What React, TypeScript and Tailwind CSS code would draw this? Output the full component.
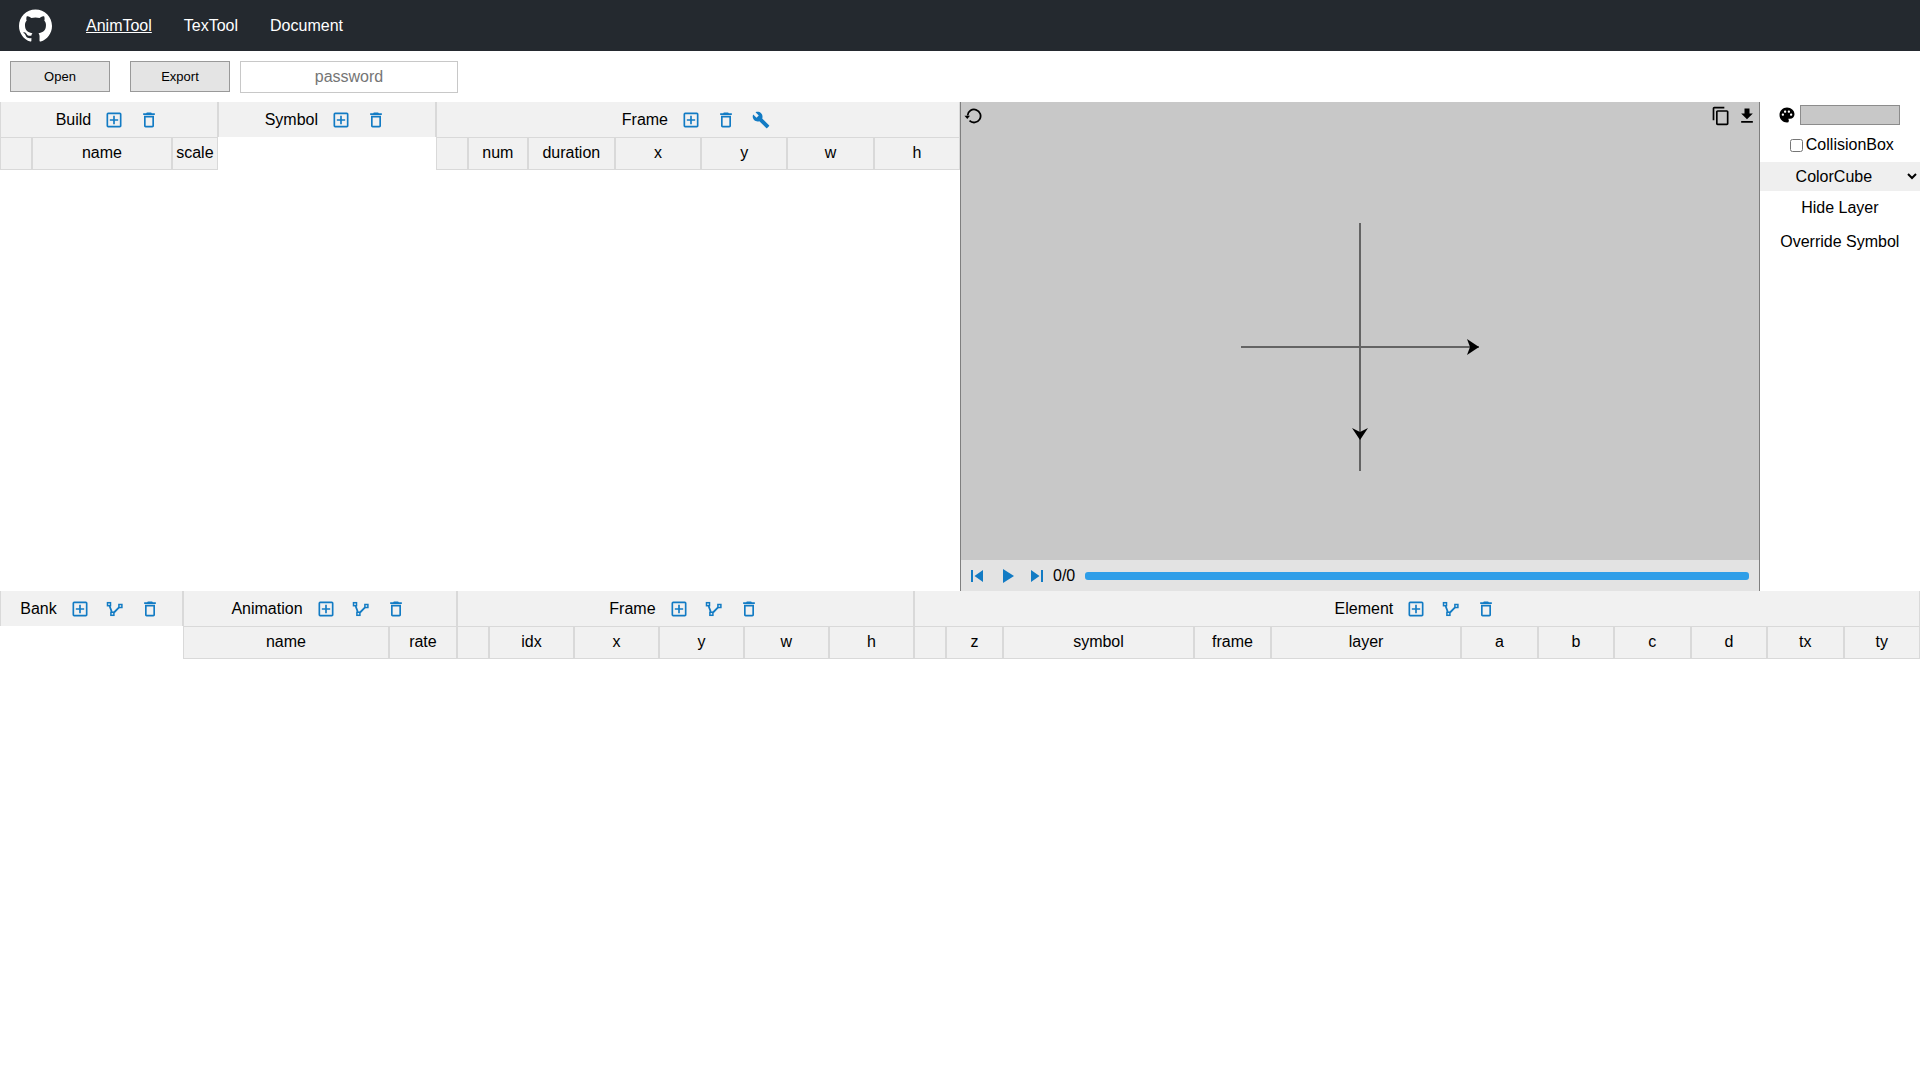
import { ReactNode } from 'react'
import { MdContentCopy, MdDeleteOutline, MdDownload, MdBuild, MdPalette, MdOutlineAddBox, MdSkipNext, MdSkipPrevious, MdPlayArrow } from 'react-icons/md'
import { SiGithub } from 'react-icons/si'

interface IconButtonProps {
    label: string,
    children: ReactNode
}

interface Column {
    label: string,
    width: string
}

interface PanelProps {
    title: string,
    width: string,
    actions: string[],
    columns?: Column[]
}

const PolylineIcon = () => (
    <svg width="18" height="18" viewBox="0 0 18 18" fill="none" stroke="currentColor" strokeWidth="1.5">
        <rect x="1.5" y="2.7" width="3" height="3" />
        <rect x="12.9" y="4.5" width="3" height="3" />
        <rect x="4.9" y="12.3" width="3" height="3" />
        <path d="M3.6 6 L5.8 12 M13 7.4 L8 12.5" strokeWidth="1.8" />
    </svg>
)

const ResetIcon = () => (
    <svg width="18" height="18" viewBox="0 0 18 18">
        <path d="M3.6 8.5 A6.5 6.5 0 1 1 5.5 13.6" fill="none" stroke="currentColor" strokeWidth="1.8" />
        <path d="M0.5 8.8 H6 L3.3 12 Z" fill="currentColor" />
    </svg>
)

const ICONS: Record<string, ReactNode> = {
    add: <MdOutlineAddBox size={20} />,
    link: <PolylineIcon />,
    delete: <MdDeleteOutline size={20} />,
    fix: <MdBuild size={18} />
}

const IconButton = ({ label, children }: IconButtonProps) => (
    <button type="button" aria-label={label} className="w-5 h-5 flex items-center justify-center cursor-pointer">
        {children}
    </button>
)

const Panel = ({ title, width, actions, columns }: PanelProps) => (
    <section className={width}>
        <div className="h-[35px] pr-[3px] flex items-center justify-center border-x border-[#d9d9d9] bg-[#f1f1f1]">
            <h2 className="mr-[13px]">{title}</h2>
            <div className="flex gap-[15px] text-[#127bc4]">
                {actions.map((action) => (
                    <IconButton key={action} label={`${action} ${title}`}>{ICONS[action]}</IconButton>
                ))}
            </div>
        </div>
        {
            columns && (
                <table className="w-full table-fixed border-separate border-spacing-0">
                    <thead>
                        <tr className="h-[33px] bg-[#f1f1f1]">
                            {columns.map((column, index) => (
                                <th key={index} className={`${column.width} p-0 pb-0.5 font-normal border border-[#d9d9d9]`}>
                                    {column.label}
                                </th>
                            ))}
                        </tr>
                    </thead>
                </table>
            )
        }
    </section>
)

const Axes = () => (
    <svg width="240" height="250" viewBox="0 0 240 250" className="shrink-0">
        <path d="M1 125 H239 M120 1 V249" stroke="#000" strokeOpacity="0.5" strokeWidth="2" />
        <path d="M227 117 L239 125 L227 133 L230 125 Z" />
        <path d="M112 206 L120 218 L128 206 L120 210 Z" />
    </svg>
)

const Preview = () => (
    <section className="w-[41.65%] flex flex-col border-x border-[#7f7f7f] bg-[#c8c8c8]">
        <div className="flex justify-between px-0.5 py-1">
            <IconButton label="reset"><ResetIcon /></IconButton>
            <div className="flex gap-[6px]">
                <IconButton label="copy"><MdContentCopy size={20} /></IconButton>
                <IconButton label="download"><MdDownload size={20} /></IconButton>
            </div>
        </div>
        <div className="flex-1 flex justify-center items-center pt-[3px]">
            <Axes />
        </div>
        <div className="h-[31px] flex items-center pl-1 pr-[10px] bg-[#e3e3e3]">
            <div className="flex gap-[6px] text-[#127bc4]">
                <button type="button" aria-label="previous"><MdSkipPrevious size={24} /></button>
                <button type="button" aria-label="play"><MdPlayArrow size={24} /></button>
                <button type="button" aria-label="next"><MdSkipNext size={24} /></button>
            </div>
            <span className="ml-1 mr-[10px]">0/0</span>
            <div className="h-2 flex-1 rounded-[3px] bg-[#2f9ee8]"></div>
        </div>
    </section>
)

const Sidebar = () => (
    <aside className="flex-1 flex flex-col items-center">
        <div className="h-[26px] pr-0.5 flex items-center gap-1">
            <MdPalette size={18} />
            <button type="button" aria-label="background color" className="w-[100px] h-5 border border-[#8c8c8c] bg-[#c8c8c8]"></button>
        </div>
        <label className="h-[34px] pl-1 flex items-center gap-[3px]">
            <input type="checkbox" className="w-[13px] h-[13px]" />
            CollisionBox
        </label>
        <select aria-label="color cube" className="w-full h-[29px] text-center bg-[#efefef]">
            <option>ColorCube</option>
        </select>
        <button type="button" className="h-[34px]">Hide Layer</button>
        <button type="button" className="h-[34px]">Override Symbol</button>
    </aside>
)

const BUILD_COLUMNS: Column[] = [
    { label: '', width: 'w-[32px]' },
    { label: 'name', width: '' },
    { label: 'scale', width: 'w-[46px]' }
]

const BUILD_FRAME_COLUMNS: Column[] = [
    { label: '', width: 'w-[32px]' },
    { label: 'num', width: 'w-[60px]' },
    { label: 'duration', width: 'w-[87px]' },
    { label: 'x', width: '' },
    { label: 'y', width: '' },
    { label: 'w', width: '' },
    { label: 'h', width: '' }
]

const ANIMATION_COLUMNS: Column[] = [
    { label: 'name', width: '' },
    { label: 'rate', width: 'w-[68px]' }
]

const ANIMATION_FRAME_COLUMNS: Column[] = [
    { label: '', width: 'w-[32px]' },
    { label: 'idx', width: '' },
    { label: 'x', width: '' },
    { label: 'y', width: '' },
    { label: 'w', width: '' },
    { label: 'h', width: '' }
]

const ELEMENT_COLUMNS: Column[] = [
    { label: '', width: 'w-[32px]' },
    { label: 'z', width: 'w-[57px]' },
    { label: 'symbol', width: 'w-[19%]' },
    { label: 'frame', width: 'w-[77px]' },
    { label: 'layer', width: 'w-[18.9%]' },
    { label: 'a', width: '' },
    { label: 'b', width: '' },
    { label: 'c', width: '' },
    { label: 'd', width: '' },
    { label: 'tx', width: '' },
    { label: 'ty', width: '' }
]

const App = () => {
    return (
        <div className="min-h-screen bg-white text-black text-base font-['Liberation_Sans',Arial,sans-serif]">
            <header className="h-[51px] flex items-center pl-[19px] bg-[#24292f] text-white">
                <a href="#github" aria-label="GitHub"><SiGithub size={33} /></a>
                <nav className="ml-[34px] flex gap-8">
                    <a href="#anim" className="underline">AnimTool</a>
                    <a href="#tex">TexTool</a>
                    <a href="#document">Document</a>
                </nav>
            </header>
            <div className="h-[51px] flex items-start pt-[10px] pl-[10px]">
                <button type="button" className="w-[100px] h-[31px] mr-5 border border-[#999] bg-[#e4e4e4] text-[13px]">Open</button>
                <button type="button" className="w-[100px] h-[31px] mr-[10px] border border-[#999] bg-[#e4e4e4] text-[13px]">Export</button>
                <input
                    type="text"
                    aria-label="password"
                    placeholder="password"
                    className="w-[218px] h-8 border border-[#c8c8c8] text-center placeholder:text-[#757575]"
                />
            </div>
            <main>
                <div className="min-h-[489px] flex">
                    <div className="w-1/2 flex">
                        <Panel title="Build" width="w-[22.7%]" actions={['add', 'delete']} columns={BUILD_COLUMNS} />
                        <Panel title="Symbol" width="w-[22.7%]" actions={['add', 'delete']} />
                        <Panel title="Frame" width="flex-1" actions={['add', 'delete', 'fix']} columns={BUILD_FRAME_COLUMNS} />
                    </div>
                    <Preview />
                    <Sidebar />
                </div>
                <div className="flex">
                    <Panel title="Bank" width="w-[9.53%]" actions={['add', 'link', 'delete']} />
                    <Panel title="Animation" width="w-[14.27%]" actions={['add', 'link', 'delete']} columns={ANIMATION_COLUMNS} />
                    <Panel title="Frame" width="w-[23.8%]" actions={['add', 'link', 'delete']} columns={ANIMATION_FRAME_COLUMNS} />
                    <Panel title="Element" width="flex-1" actions={['add', 'link', 'delete']} columns={ELEMENT_COLUMNS} />
                </div>
            </main>
        </div>
    )
}

export default App
